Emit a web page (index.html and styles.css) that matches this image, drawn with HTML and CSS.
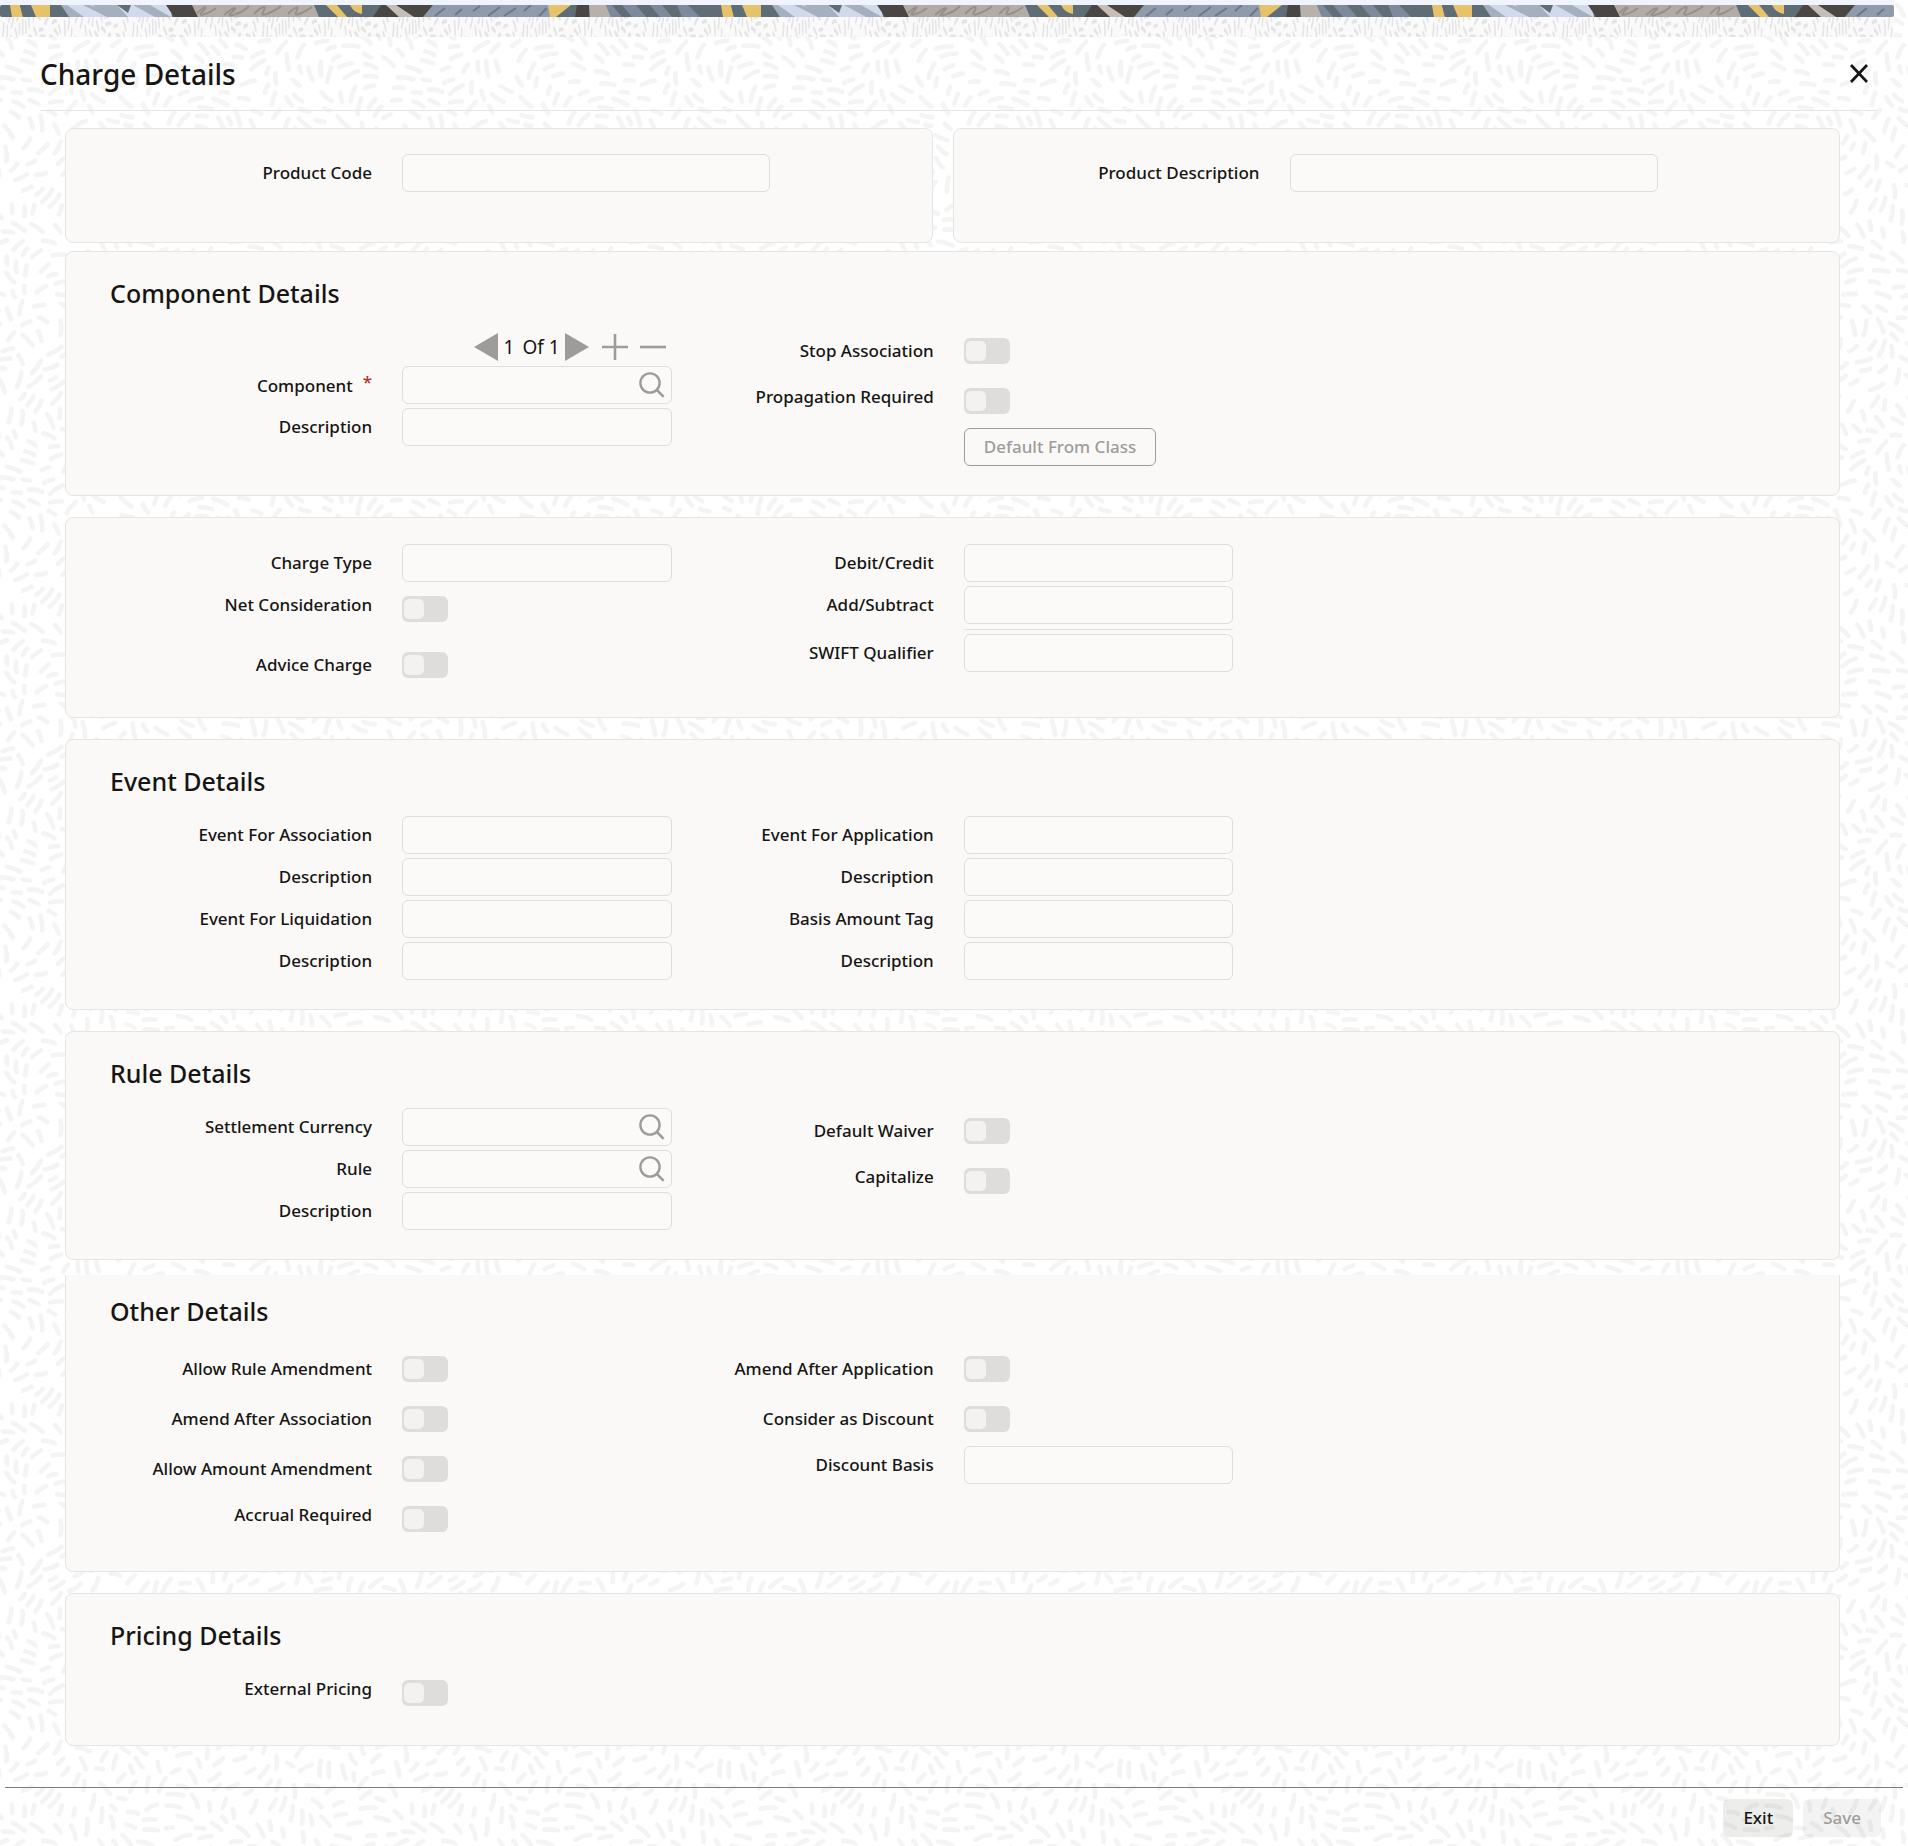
FILE: index.html
```html
<!DOCTYPE html>
<html lang="en">

<head>
    <meta charset="UTF-8">
    <meta name="viewport" content="width=device-width, initial-scale=1.0">
    <title>Charge Details</title>
    <link rel="stylesheet" href="styles.css">
</head>

<body>

    <!-- shared icon -->
    <svg class="defs" width="0" height="0" aria-hidden="true">
        <symbol id="icon-search" viewBox="0 0 26 26">
            <circle cx="11" cy="11" r="9.6" fill="none" stroke="#9e9c9a" stroke-width="2.4"/>
            <path d="M17.6 17.6L24.6 24.8" fill="none" stroke="#9e9c9a" stroke-width="2.6"/>
        </symbol>
    </svg>

    <div class="banner">
        <svg width="100%" height="12" aria-hidden="true">
            <defs>
                <pattern id="strip" width="711" height="12" patternUnits="userSpaceOnUse">
                    <rect width="711" height="12" fill="#5f6d77"/>
                    <path d="M10 0H20L23 12H12ZM21 0H50V12H32Z" fill="#e6c26a"/>
                    <path d="M20 0H31L36 12H23Z" fill="#5f6d77"/>
                    <path d="M61 0H120L140 12H69Z" fill="#a5b0bf"/>
                    <path d="M67 0H83L107 12H84ZM90 0H170L172 12H124Z" fill="#d0daea"/>
                    <path d="M93 0H117L128 12H110ZM133 0H150L171 12H155Z" fill="#a5b0bf"/>
                    <path d="M117 0H131L128 8Z" fill="#5f6d77"/>
                    <path d="M166 0H192L198 12H174Z" fill="#4a4643"/>
                    <path d="M192 0H314L319 12H198Z" fill="#b3aba6"/>
                    <path d="M197 8C206 0 208 1 202 7S210 8 216 3M224 10C236 0 238 2 231 8S243 8 249 1M254 9C262 1 268 -1 263 7S278 4 281 1M288 9C296 1 300 0 296 7S308 5 312 2" fill="none" stroke="#979089" stroke-width="2"/>
                    <path d="M326 0H337L347 12H338ZM350 0H362V9Q354 8 350 0Z" fill="#e6c26a"/>
                    <path d="M381 0H433L424 12H373Z" fill="#4a4643"/>
                    <path d="M386 0H396L414 12H399Z" fill="#c5bdb6"/>
                    <path d="M433 0H549L551 12H423Z" fill="#8f9baa"/>
                    <path d="M445 3L435 11M462 4L455 10M480 1L473 6M500 2L488 11M516 3L504 11M531 0L524 6M547 3L539 11" fill="none" stroke="#6b7888" stroke-width="2"/>
                    <path d="M548 0H571L556 12H550Z" fill="#e6c26a"/>
                    <path d="M577 0H589V12H575Z" fill="#4a4643"/>
                    <path d="M589 0H606L611 12H590Z" fill="#b7b0ab"/>
                    <path d="M606 0H688L700 12H611Z" fill="#7d8a9b"/>
                    <path d="M612 0H622L632 12H622ZM636 0H650L660 12H646ZM662 0H677L682 12H672Z" fill="#5f6d77"/>
                </pattern>
            </defs>
            <rect width="100%" height="12" rx="2" fill="url(#strip)"/>
        </svg>
    </div>
    <div class="grass"></div>

    <header class="header">
        <h1>Charge Details</h1>
        <button class="close" type="button" aria-label="Close">
            <svg width="18" height="20" viewBox="0 0 18 20"><path d="M1 1L17 18M17 1L1 18" fill="none" stroke="#161513" stroke-width="2.7"/></svg>
        </button>
    </header>

    <main>
        <div class="product">
            <section class="card card-code">
                <div class="field">
                    <label for="product-code">Product Code</label>
                    <input type="text" id="product-code">
                </div>
            </section>
            <section class="card card-description">
                <div class="field">
                    <label for="product-description">Product Description</label>
                    <input type="text" id="product-description">
                </div>
            </section>
        </div>

        <section class="card">
            <h2>Component Details</h2>
            <div class="columns">
                <div class="column">
                    <div class="pager">
                        <button type="button" aria-label="Previous"><svg width="24" height="28" viewBox="0 0 24 28"><path d="M0 14L24 0V28Z" fill="#9e9c9a"/></svg></button>
                        <span>1</span>
                        <span class="total">Of 1</span>
                        <button type="button" aria-label="Next"><svg width="24" height="28" viewBox="0 0 24 28"><path d="M24 14L0 0V28Z" fill="#9e9c9a"/></svg></button>
                        <button class="add" type="button" aria-label="Add"><svg width="26" height="26" viewBox="0 0 26 26"><path d="M13 0V26M0 13H26" stroke="#9e9c9a" stroke-width="2.6"/></svg></button>
                        <button class="remove" type="button" aria-label="Remove"><svg width="26" height="26" viewBox="0 0 26 26"><path d="M0 13H26" stroke="#9e9c9a" stroke-width="2.6"/></svg></button>
                    </div>
                    <div class="field">
                        <label for="component">Component<span class="required">*</span></label>
                        <div class="lookup">
                            <input type="text" id="component" required>
                            <button type="button" aria-label="Search component"><svg width="26" height="26"><use href="#icon-search"/></svg></button>
                        </div>
                    </div>
                    <div class="field">
                        <label for="component-description">Description</label>
                        <input type="text" id="component-description">
                    </div>
                </div>
                <div class="column">
                    <div class="field field-switch">
                        <label for="stop-association">Stop Association</label>
                        <input type="checkbox" id="stop-association">
                    </div>
                    <div class="field field-switch field-raised">
                        <label for="propagation">Propagation Required</label>
                        <input type="checkbox" id="propagation">
                    </div>
                    <div class="field">
                        <button class="default-class" type="button" disabled>Default From Class</button>
                    </div>
                </div>
            </div>
        </section>

        <section class="card card-untitled">
            <div class="columns">
                <div class="column">
                    <div class="field">
                        <label for="charge-type">Charge Type</label>
                        <input type="text" id="charge-type">
                    </div>
                    <div class="field field-switch field-raised">
                        <label for="net-consideration">Net Consideration</label>
                        <input type="checkbox" id="net-consideration">
                    </div>
                    <div class="field field-folded"></div>
                    <div class="field field-switch">
                        <label for="advice-charge">Advice Charge</label>
                        <input type="checkbox" id="advice-charge">
                    </div>
                </div>
                <div class="column">
                    <div class="field">
                        <label for="debit-credit">Debit/Credit</label>
                        <input type="text" id="debit-credit">
                    </div>
                    <div class="field">
                        <label for="add-subtract">Add/Subtract</label>
                        <input type="text" id="add-subtract">
                    </div>
                    <div class="field field-folded"><span class="fold"></span></div>
                    <div class="field">
                        <label for="swift-qualifier">SWIFT Qualifier</label>
                        <input type="text" id="swift-qualifier">
                    </div>
                </div>
            </div>
        </section>

        <section class="card">
            <h2>Event Details</h2>
            <div class="columns">
                <div class="column">
                    <div class="field">
                        <label for="event-association">Event For Association</label>
                        <input type="text" id="event-association">
                    </div>
                    <div class="field">
                        <label for="association-description">Description</label>
                        <input type="text" id="association-description">
                    </div>
                    <div class="field">
                        <label for="event-liquidation">Event For Liquidation</label>
                        <input type="text" id="event-liquidation">
                    </div>
                    <div class="field">
                        <label for="liquidation-description">Description</label>
                        <input type="text" id="liquidation-description">
                    </div>
                </div>
                <div class="column">
                    <div class="field">
                        <label for="event-application">Event For Application</label>
                        <input type="text" id="event-application">
                    </div>
                    <div class="field">
                        <label for="application-description">Description</label>
                        <input type="text" id="application-description">
                    </div>
                    <div class="field">
                        <label for="basis-tag">Basis Amount Tag</label>
                        <input type="text" id="basis-tag">
                    </div>
                    <div class="field">
                        <label for="basis-description">Description</label>
                        <input type="text" id="basis-description">
                    </div>
                </div>
            </div>
        </section>

        <section class="card">
            <h2>Rule Details</h2>
            <div class="columns">
                <div class="column">
                    <div class="field">
                        <label for="settlement-currency">Settlement Currency</label>
                        <div class="lookup">
                            <input type="text" id="settlement-currency">
                            <button type="button" aria-label="Search currency"><svg width="26" height="26"><use href="#icon-search"/></svg></button>
                        </div>
                    </div>
                    <div class="field">
                        <label for="rule">Rule</label>
                        <div class="lookup">
                            <input type="text" id="rule">
                            <button type="button" aria-label="Search rule"><svg width="26" height="26"><use href="#icon-search"/></svg></button>
                        </div>
                    </div>
                    <div class="field">
                        <label for="rule-description">Description</label>
                        <input type="text" id="rule-description">
                    </div>
                </div>
                <div class="column">
                    <div class="field field-switch">
                        <label for="default-waiver">Default Waiver</label>
                        <input type="checkbox" id="default-waiver">
                    </div>
                    <div class="field field-switch field-raised">
                        <label for="capitalize">Capitalize</label>
                        <input type="checkbox" id="capitalize">
                    </div>
                </div>
            </div>
        </section>

        <section class="card card-open">
            <h2>Other Details</h2>
            <div class="columns">
                <div class="column">
                    <div class="field field-switch">
                        <label for="rule-amendment">Allow Rule Amendment</label>
                        <input type="checkbox" id="rule-amendment">
                    </div>
                    <div class="field field-switch">
                        <label for="amend-association">Amend After Association</label>
                        <input type="checkbox" id="amend-association">
                    </div>
                    <div class="field field-switch">
                        <label for="amount-amendment">Allow Amount Amendment</label>
                        <input type="checkbox" id="amount-amendment">
                    </div>
                    <div class="field field-switch field-raised">
                        <label for="accrual">Accrual Required</label>
                        <input type="checkbox" id="accrual">
                    </div>
                </div>
                <div class="column">
                    <div class="field field-switch">
                        <label for="amend-application">Amend After Application</label>
                        <input type="checkbox" id="amend-application">
                    </div>
                    <div class="field field-switch">
                        <label for="discount">Consider as Discount</label>
                        <input type="checkbox" id="discount">
                    </div>
                    <div class="field">
                        <label for="discount-basis">Discount Basis</label>
                        <input type="text" id="discount-basis">
                    </div>
                </div>
            </div>
        </section>

        <section class="card">
            <h2>Pricing Details</h2>
            <div class="columns">
                <div class="column">
                    <div class="field field-switch field-raised">
                        <label for="external-pricing">External Pricing</label>
                        <input type="checkbox" id="external-pricing">
                    </div>
                </div>
            </div>
        </section>
    </main>

    <footer class="footer">
        <button type="button">Exit</button>
        <button type="button" disabled>Save</button>
    </footer>

    <script src="texture.js"></script>
</body>

</html>
```
FILE: styles.css
```css
* {
    box-sizing: border-box;
}

body {
    margin: 0;
    background-color: #fff;
    background-image: var(--texture);
    color: #161513;
    font-family: "Noto Sans", "Open Sans", sans-serif;
    font-size: 17px;
    font-weight: 500;
    line-height: 24px;
}

button,
input {
    font: inherit;
    color: inherit;
    margin: 0;
}

button {
    padding: 0;
    border: none;
    background: none;
    cursor: pointer;
}

svg {
    display: block;
}

.defs {
    position: absolute;
}

/* top strip */
.banner {
    padding-top: 5px;
    margin-right: 14px;
    background-color: #f0f4ff;
}

.grass {
    height: 20px;
    margin-right: 14px;
    background-color: #fafafa;
    background-image: var(--grass);
    background-size: 130px 340px;
}

.header {
    display: flex;
    align-items: center;
    justify-content: space-between;
    height: 74px;
    margin: 0 31px 0 40px;
    padding-right: 9px;
    border-bottom: 1px solid #e6e5e4;
}

h1 {
    margin: 0;
    font-size: 28px;
    font-weight: 500;
    line-height: 36px;
}

main {
    padding: 17px 68px 41px 65px;
}

/* cards */
.card {
    margin-bottom: 21px;
    padding: 25px 44px 29px;
    border: 1px solid #e6e5e4;
    border-radius: 8px;
    background-color: #faf9f8;
}

.card:last-child {
    margin-bottom: 0;
}

.card:has(+ .card-open) {
    margin-bottom: 15px;
}

.card-untitled {
    padding-top: 26px;
}

.card-open {
    padding-top: 20px;
    border-top: none;
    border-top-left-radius: 0;
    border-top-right-radius: 0;
}

h2 {
    margin: 0 0 19px;
    font-size: 25px;
    font-weight: 500;
    line-height: 32px;
}

.product {
    display: grid;
    grid-template-columns: 868fr 888fr;
    gap: 20px;
    margin-bottom: 8px;
}

.product .card {
    margin: 0;
    padding-bottom: 50px;
}

.product .field {
    grid-template-columns: minmax(0, 292px) minmax(0, 368px);
}

.columns {
    display: grid;
    grid-template-columns: repeat(3, 1fr);
}

.column {
    display: flex;
    flex-direction: column;
    gap: 4px;
}

/* fields */
.field {
    display: grid;
    grid-template-columns: 52% 48%;
    align-items: center;
    min-height: 38px;
}

.field label {
    padding-right: 30px;
    text-align: right;
}

.field input[type="text"] {
    width: 100%;
    height: 38px;
    padding: 0 10px;
    border: 1px solid #dedddb;
    border-radius: 6px;
    background-color: #fbfaf9;
}

.field-switch {
    min-height: 46px;
}

.field-raised label {
    padding-bottom: 8px;
}

.field-folded {
    min-height: 2px;
}

.fold {
    grid-column: 2;
    height: 2px;
    border-bottom: 1px solid #dedddb;
    border-radius: 0 0 4px 4px;
}

.required {
    padding-left: 10px;
    color: #b3311f;
    vertical-align: 4px;
    line-height: 1;
}

.field input[type="checkbox"] {
    appearance: none;
    width: 46px;
    height: 26px;
    padding: 3px 2px;
    border-radius: 6px;
    background-color: #dedddb;
}

.field input[type="checkbox"]::before {
    content: "";
    display: block;
    width: 20px;
    height: 20px;
    border-radius: 5px;
    background-color: #f3f2f0;
}

.field input[type="checkbox"]:checked::before {
    margin-left: 22px;
}

.lookup {
    position: relative;
}

.lookup button {
    position: absolute;
    top: 6px;
    right: 7px;
}

.pager {
    display: flex;
    align-items: center;
    justify-content: flex-end;
    height: 34px;
    padding: 4px 6px 0 0;
    font-size: 19px;
    font-weight: 400;
}

.pager span {
    padding-left: 6px;
}

.pager .total {
    padding: 0 5px 0 8px;
}

.pager .add {
    margin-left: 13px;
}

.pager .remove {
    margin-left: 12px;
}

.default-class {
    grid-column: 2;
    justify-self: start;
    height: 38px;
    padding: 0 19px;
    border: 1px solid #9e9c9a;
    border-radius: 6px;
    color: #9e9c9a;
}

/* bottom bar */
.footer {
    display: flex;
    justify-content: flex-end;
    gap: 10px;
    margin: 0 5px;
    padding: 11px 22px 8px;
    border-top: 1px solid #7d7c7b;
}

.footer button {
    height: 38px;
    padding: 0 20px;
    border-radius: 6px;
    background-color: rgba(22, 21, 19, 0.08);
}

.footer button:disabled {
    background-color: rgba(22, 21, 19, 0.05);
    color: #9e9c9a;
}
```
FILE: texture.js
```js
// Builds a repeating tile of short brush strokes that follow a wavy field
var size = 400;
var seed = 7;

function random() {
    seed = (seed * 16807) % 2147483647;
    return seed / 2147483647;
}

function angleAt(x, y) {
    var u = x / size * Math.PI * 2;
    var v = y / size * Math.PI * 2;
    return 1.5 * Math.sin(2 * u + Math.sin(v)) + 1.4 * Math.cos(2 * v + Math.sin(2 * u)) + 0.3 * (random() - 0.5);
}

function wrapped(d) {
    d = Math.abs(d);
    return Math.min(d, size - d);
}

function buildStrokes() {
    var taken = [];
    var path = '';
    for (var i = 0; i < 12000; i++) {
        var x = random() * size;
        var y = random() * size;
        var a = angleAt(x, y);
        var half = 4 + random() * 4;
        // shorter strokes fill what is left
        if (i > 6000) half = 3 + random() * 2;
        var dx = Math.cos(a) * half;
        var dy = Math.sin(a) * half;
        var points = [[x - dx, y - dy], [x, y], [x + dx, y + dy]];
        var free = points.every(function (p) {
            return taken.every(function (q) {
                return Math.hypot(wrapped(p[0] - q[0]), wrapped(p[1] - q[1])) > 8;
            });
        });
        if (!free) continue;
        taken = taken.concat(points);
        // strokes that cross an edge are repeated on the other side
        for (var ox = -size; ox <= size; ox += size) {
            for (var oy = -size; oy <= size; oy += size) {
                var px = x + ox;
                var py = y + oy;
                if (px < -12 || px > size + 12 || py < -12 || py > size + 12) continue;
                path += 'M' + (px - dx).toFixed(1) + ' ' + (py - dy).toFixed(1) +
                    'Q' + (px + dy * 0.2).toFixed(1) + ' ' + (py - dx * 0.2).toFixed(1) +
                    ' ' + (px + dx).toFixed(1) + ' ' + (py + dy).toFixed(1);
            }
        }
    }
    return path;
}

function tile(path, color, ratio) {
    var svg = '<svg xmlns="http://www.w3.org/2000/svg" width="' + size + '" height="' + size +
        '" viewBox="0 0 ' + size + ' ' + size + '" preserveAspectRatio="' + ratio + '"><path d="' + path +
        '" fill="none" stroke="' + color + '" stroke-width="4.6" stroke-linecap="round"/></svg>';
    return 'url("data:image/svg+xml,' + encodeURIComponent(svg) + '")';
}

var strokes = buildStrokes();
document.documentElement.style.setProperty('--texture', tile(strokes, '#f4f4f4', 'xMidYMid'));
document.documentElement.style.setProperty('--grass', tile(strokes, '#e4e4e4', 'none'));
```
